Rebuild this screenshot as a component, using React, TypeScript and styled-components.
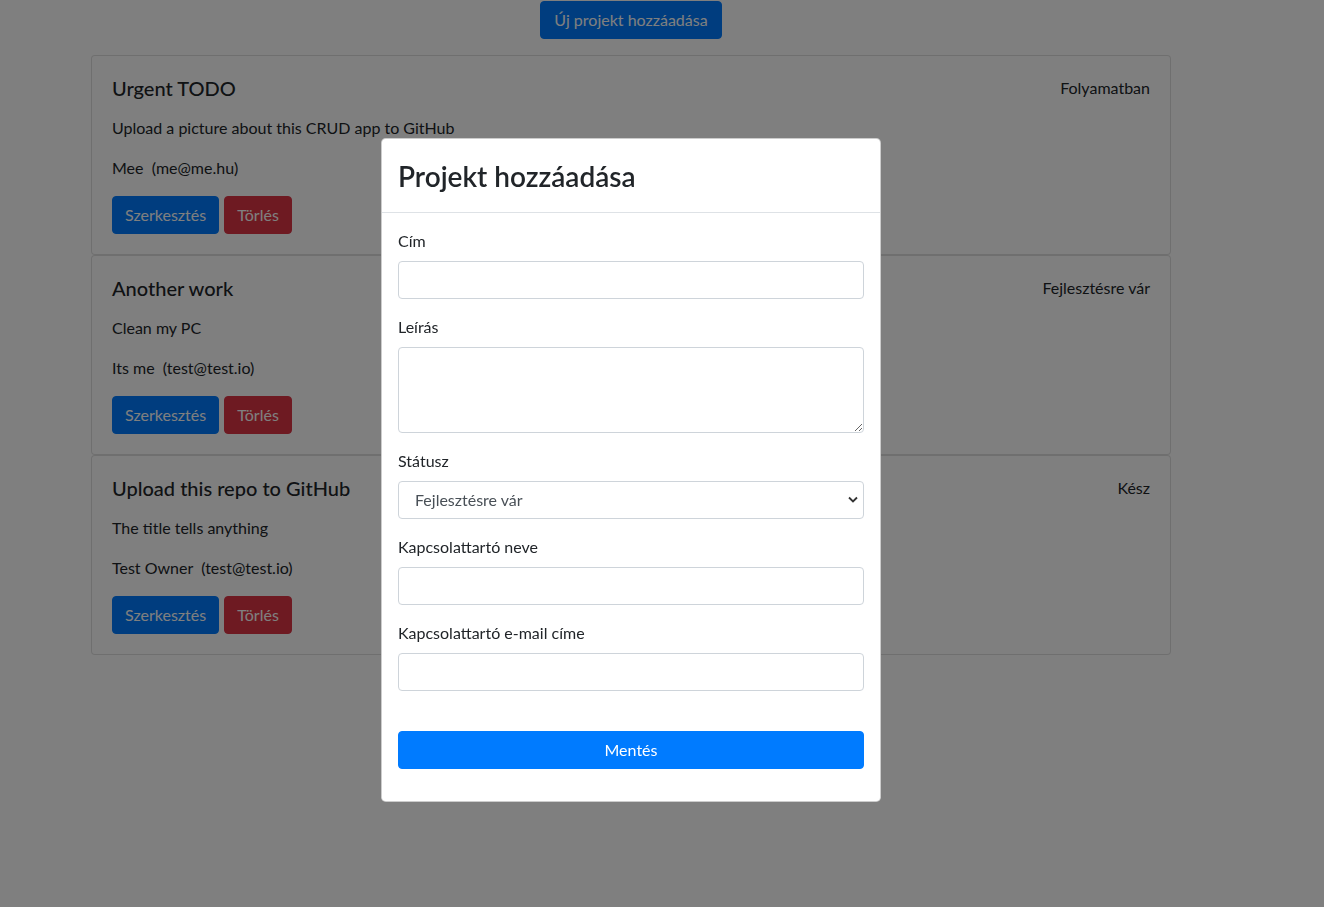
import React from "react";
import styled, { createGlobalStyle, css } from "styled-components";

const GlobalStyle = createGlobalStyle`
  * { box-sizing: border-box; }
  html, body { margin: 0; padding: 0; }
  body {
    font-family: Lato, "Liberation Sans", sans-serif;
    font-size: 16px;
    line-height: 1.5;
    color: #212529;
    background: #fff;
  }
`;

const Page = styled.div`
  width: 1262px;
  display: flex;
  flex-direction: column;
  align-items: center;
  padding-top: 1px;
`;

const Button = styled.button<{ $variant: "primary" | "danger" }>`
  display: inline-block;
  font-family: inherit;
  font-size: 16px;
  line-height: 24px;
  font-weight: 400;
  padding: 6px 12px;
  border-radius: 4px;
  border: 1px solid transparent;
  color: #fff;
  cursor: pointer;
  ${(p) =>
    p.$variant === "primary"
      ? css`
          background: #007bff;
          border-color: #007bff;
        `
      : css`
          background: #dc3545;
          border-color: #dc3545;
        `}
`;

const TopButton = styled(Button)`
  margin-bottom: 16px;
  padding: 6px 13px;
`;

const CardList = styled.div`
  width: 1080px;
  display: flex;
  flex-direction: column;
`;

const Card = styled.div`
  border: 1px solid rgba(0, 0, 0, 0.125);
  border-radius: 4px;
  padding: 20px;
  background: #fff;
`;

const CardHead = styled.div`
  display: flex;
  justify-content: space-between;
  align-items: center;
  margin-bottom: 16px;
`;

const CardTitle = styled.h5`
  margin: 0;
  font-size: 20px;
  font-weight: 500;
  line-height: 24px;
`;

const Status = styled.span`
  line-height: 24px;
`;

const Text = styled.p`
  margin: 0 0 16px;
  line-height: 24px;
`;

const Actions = styled.div`
  display: flex;
  gap: 5px;
`;

const Backdrop = styled.div`
  position: fixed;
  inset: 0;
  background: rgba(0, 0, 0, 0.5);
  display: flex;
  justify-content: center;
  align-items: flex-start;
  padding: 138px 62px 0 0;
`;

const Dialog = styled.div`
  width: 500px;
  background: #fff;
  border: 1px solid rgba(0, 0, 0, 0.2);
  border-radius: 4.8px;
`;

const ModalHeader = styled.div`
  padding: 20px 16px 16px;
  border-bottom: 1px solid #dee2e6;
`;

const ModalTitle = styled.h3`
  margin: 0 0 3px;
  font-size: 28px;
  font-weight: 600;
  line-height: 34px;
`;

const ModalBody = styled.form`
  padding: 16px;
`;

const FormGroup = styled.div`
  margin-bottom: 16px;
`;

const Label = styled.label`
  display: block;
  margin-bottom: 8px;
  line-height: 24px;
`;

const fieldBase = css`
  display: block;
  width: 100%;
  font-family: inherit;
  font-size: 16px;
  line-height: 24px;
  color: #495057;
  background: #fff;
  border: 1px solid #ced4da;
  border-radius: 4px;
  padding: 6px 12px;
  outline: none;
`;

const Input = styled.input`
  ${fieldBase};
  height: 38px;
`;

const TextArea = styled.textarea`
  ${fieldBase};
  height: 86px;
`;

const SelectWrap = styled.div`
  position: relative;
`;

const Select = styled.select`
  ${fieldBase};
  height: 38px;
  appearance: none;
  padding-left: 16px;
`;

const Chevron = styled.svg`
  position: absolute;
  right: 6px;
  top: 15px;
  pointer-events: none;
`;

const SaveButton = styled(Button)`
  display: block;
  width: 100%;
  margin: 40px 0 16px;
`;

const projects = [
  {
    title: "Urgent TODO",
    status: "Folyamatban",
    desc: "Upload a picture about this CRUD app to GitHub",
    owner: "Mee",
    email: "me@me.hu",
  },
  {
    title: "Another work",
    status: "Fejlesztésre vár",
    desc: "Clean my PC",
    owner: "Its me",
    email: "test@test.io",
  },
  {
    title: "Upload this repo to GitHub",
    status: "Kész",
    desc: "The title tells anything",
    owner: "Test Owner",
    email: "test@test.io",
  },
];

export default function App() {
  return (
    <>
      <GlobalStyle />
      <Page>
        <TopButton $variant="primary">Új projekt hozzáadása</TopButton>
        <CardList>
          {projects.map((p) => (
            <Card key={p.title}>
              <CardHead>
                <CardTitle>{p.title}</CardTitle>
                <Status>{p.status}</Status>
              </CardHead>
              <Text>{p.desc}</Text>
              <Text>
                {p.owner}
                {"\u00a0 "}({p.email})
              </Text>
              <Actions>
                <Button $variant="primary">Szerkesztés</Button>
                <Button $variant="danger">Törlés</Button>
              </Actions>
            </Card>
          ))}
        </CardList>
      </Page>
      <Backdrop>
        <Dialog>
          <ModalHeader>
            <ModalTitle>Projekt hozzáadása</ModalTitle>
          </ModalHeader>
          <ModalBody onSubmit={(e) => e.preventDefault()}>
            <FormGroup>
              <Label>Cím</Label>
              <Input type="text" />
            </FormGroup>
            <FormGroup>
              <Label>Leírás</Label>
              <TextArea rows={3} />
            </FormGroup>
            <FormGroup>
              <Label>Státusz</Label>
              <SelectWrap>
                <Select defaultValue="Fejlesztésre vár">
                  <option>Fejlesztésre vár</option>
                  <option>Folyamatban</option>
                  <option>Kész</option>
                </Select>
                <Chevron width="10" height="7" viewBox="0 0 10 7">
                  <polyline
                    points="1,1.5 5,5.5 9,1.5"
                    fill="none"
                    stroke="#333"
                    strokeWidth="1.8"
                  />
                </Chevron>
              </SelectWrap>
            </FormGroup>
            <FormGroup>
              <Label>Kapcsolattartó neve</Label>
              <Input type="text" />
            </FormGroup>
            <FormGroup>
              <Label>Kapcsolattartó e-mail címe</Label>
              <Input type="email" />
            </FormGroup>
            <SaveButton $variant="primary" type="submit">
              Mentés
            </SaveButton>
          </ModalBody>
        </Dialog>
      </Backdrop>
    </>
  );
}
